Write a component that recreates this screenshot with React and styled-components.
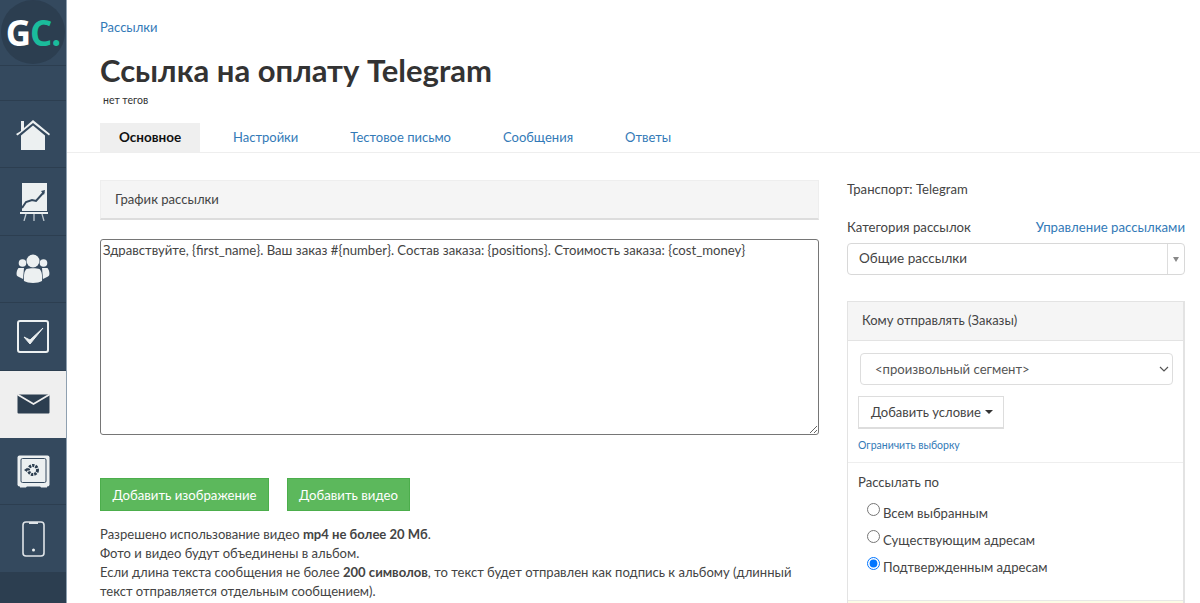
import React from "react";
import styled, { createGlobalStyle } from "styled-components";

const GlobalStyle = createGlobalStyle`
  html, body {
    margin: 0;
    padding: 0;
    height: 100%;
    overflow: hidden;
    background: #fff;
  }
  body {
    font-family: Lato, "Open Sans", sans-serif;
    font-size: 13px;
    color: #444;
  }
  * { box-sizing: border-box; }
`;

const Page = styled.div`
  display: flex;
  width: 1200px;
  height: 603px;
  overflow: hidden;
`;

const Sidebar = styled.nav`
  flex: none;
  width: 67px;
  height: 603px;
  background: #34495e;
  border-right: 1px solid #8fa0b0;
  display: flex;
  flex-direction: column;
`;

const LogoRow = styled.div`
  height: 66px;
  border-bottom: 1px solid #2c3e50;
  overflow: hidden;
`;

const LogoCircle = styled.div`
  width: 64px;
  height: 64px;
  border-radius: 50%;
  background: #2c3e50;
  margin: 0 0 0 1px;
  display: flex;
  align-items: center;
  justify-content: center;
  font-family: "Open Sans", sans-serif;
  font-weight: 700;
  font-size: 35px;
  letter-spacing: -1px;
  color: #fff;
  span { color: #1abc9c; }
`;

const EmptyRow = styled.div`
  height: 35px;
  border-bottom: 1px solid #2c3e50;
`;

const NavItem = styled.div`
  height: 67.400px;
  display: flex;
  align-items: center;
  justify-content: center;
  background: ${(p) => (p.$active ? "#efefef" : "transparent")};
  border-bottom: 1px solid ${(p) => (p.$active ? "#efefef" : "#2c3e50")};
`;

const SideBottom = styled.div`
  flex: 1;
  background: #2c3e50;
`;

const Main = styled.main`
  flex: 1;
  min-width: 0;
`;

const Header = styled.header`
  padding: 19px 0 0 33px;
`;

const Crumb = styled.a`
  display: block;
  color: #337ab7;
  font-size: 13px;
  line-height: 17px;
`;

const Title = styled.h1`
  margin: 14px 0 0;
  font-size: 31px;
  line-height: 40px;
  font-weight: 700;
  color: #333;
`;

const Tags = styled.div`
  margin: 3px 0 0 3px;
  font-size: 10.500px;
  line-height: 14px;
  color: #333;
`;

const Tabs = styled.div`
  display: flex;
  margin-top: 16px;
  padding-left: 33px;
  height: 30px;
  border-bottom: 1px solid #eee;
`;

const Tab = styled.a`
  height: 29px;
  line-height: 28px;
  padding: 0 26px;
  font-size: 13px;
  color: #337ab7;
`;

const ActiveTab = styled(Tab)`
  width: 100px;
  margin-right: 7px;
  padding: 0;
  text-align: center;
  font-size: 13.500px;
  font-weight: 700;
  color: #111;
  background: #efefef;
`;

const Columns = styled.div`
  display: flex;
  padding: 27px 15px 0 33px;
  gap: 28px;
`;

const LeftCol = styled.div`
  width: 719px;
  flex: none;
`;

const RightCol = styled.aside`
  width: 338px;
  flex: none;
`;

const ScheduleBar = styled.div`
  height: 40px;
  background: #f5f5f5;
  border: 1px solid #eee;
  border-bottom: 2px solid #ddd;
  padding-left: 14px;
  line-height: 37px;
  font-size: 13.100px;
`;

const MessageBox = styled.textarea`
  display: block;
  width: 719px;
  height: 196px;
  margin-top: 19px;
  padding: 2px;
  font: inherit;
  font-size: 13.150px;
  line-height: 17px;
  color: #444;
  border: 1px solid #767676;
  border-radius: 3px;
  outline: none;
`;

const ButtonRow = styled.div`
  display: flex;
  gap: 18px;
  margin-top: 43px;
`;

const GreenButton = styled.button`
  width: ${(p) => p.$w}px;
  height: 33px;
  padding: 0;
  border: 1px solid #4cae4c;
  background: #5cb85c;
  color: #fff;
  font: inherit;
  font-size: 13.200px;
`;

const Note = styled.p`
  margin: 14px 0 0;
  font-size: 13.050px;
  line-height: 19px;
`;

const Plain = styled.div`
  font-size: 13.100px;
  line-height: 18px;
`;

const CategoryRow = styled.div`
  display: flex;
  justify-content: space-between;
  margin-top: 21px;
  font-size: 13.200px;
  line-height: 17px;
  a { color: #337ab7; }
`;

const Combo = styled.div`
  display: flex;
  height: 32px;
  margin-top: 7px;
  border: 1px solid #d8d8d8;
  border-radius: 4px;
`;

const ComboValue = styled.div`
  flex: 1;
  padding-left: 11px;
  line-height: 29px;
  font-size: 13.500px;
`;

const ComboArrow = styled.div`
  width: 17px;
  border-left: 1px solid #ddd;
  display: flex;
  align-items: center;
  justify-content: center;
  &::after {
    content: "";
    border-top: 5px solid #888;
    border-left: 3px solid transparent;
    border-right: 3px solid transparent;
  }
`;

const Panel = styled.section`
  margin-top: 26px;
  border: 1px solid #e3e3e3;
  border-width: 1px 2px 0 1px;
  height: 310px;
`;

const PanelHead = styled.div`
  height: 39px;
  background: #f5f5f5;
  border-bottom: 1px solid #e3e3e3;
  padding-left: 14px;
  line-height: 37px;
  font-size: 13px;
`;

const PanelTop = styled.div`
  padding: 12px 10px 0;
  height: 122px;
  border-bottom: 1px solid #eee;
`;

const SegmentSelect = styled.div`
  height: 32px;
  margin: 0 0 0 2px;
  border: 1px solid #ddd;
  border-radius: 4px;
  padding-left: 14px;
  line-height: 30px;
  font-size: 13.100px;
  color: #555;
  display: flex;
  justify-content: space-between;
  align-items: center;
  svg { margin-right: 3px; }
`;

const ConditionButton = styled.div`
  display: inline-flex;
  align-items: center;
  gap: 4px;
  height: 33px;
  width: 146px;
  margin-top: 11px;
  padding-left: 12px;
  border: 1px solid #ddd;
  border-bottom-width: 2px;
  font-size: 13px;
  &::after {
    content: "";
    border-top: 4px solid #333;
    border-left: 4px solid transparent;
    border-right: 4px solid transparent;
  }
`;

const SmallLink = styled.a`
  display: block;
  margin-top: 9px;
  color: #337ab7;
  font-size: 10.500px;
  line-height: 15px;
`;

const PanelBottom = styled.div`
  padding: 10px 10px 0;
  height: 137px;
`;

const RadioRow = styled.label`
  display: flex;
  align-items: center;
  height: 27px;
  padding-left: 9px;
  font-size: 13.100px;
  input {
    margin: 0 3px 6px 0;
    width: 13px;
    height: 13px;
  }
`;

const RadioList = styled.div`
  margin-top: 8px;
`;

const NoticeBand = styled.div`
  height: 10px;
  background: #fcfce6;
  border-top: 1px solid #e8e8e8;
`;

const HomeIcon = () => (
  <svg width="34" height="34" viewBox="0 0 34 34" fill="#ecf0f1">
    <path d="M5 14 L5 4 L8 4 L8 11 L17 3 L34 17 L33 18.500 L17 6 L1.500 18.500 L0 17 Z" />
    <path d="M5 18.500 L17 8.500 L29 18.500 L29 33 L5 33 Z" />
  </svg>
);

const ChartIcon = () => (
  <svg width="32" height="38" viewBox="0 0 32 38" fill="none">
    <rect x="5" y="0" width="25" height="28" fill="#ecf0f1" />
    <path d="M5 25 L9 19 L15 17 L19 18 L27 9" stroke="#34495e" strokeWidth="2" />
    <path d="M24 8 L28 7 L27 12 Z" fill="#34495e" />
    <rect x="3" y="29" width="28" height="2" fill="#ecf0f1" />
    <path d="M9 31 L7 38 M17 31 L17 38 M25 31 L27 38" stroke="#bdc7cf" strokeWidth="1.300" />
  </svg>
);

const TeamIcon = () => (
  <svg width="34" height="30" viewBox="0 0 34 30" fill="#ecf0f1">
    <circle cx="6.500" cy="9" r="3.800" />
    <circle cx="27.500" cy="9" r="3.800" />
    <path d="M2.500 14 L8 14 L7 25 L2 22.500 C0 22 0 17 2.500 14 Z" />
    <path d="M31.500 14 L26 14 L27 25 L32 22.500 C34 22 34 17 31.500 14 Z" />
    <circle cx="17" cy="7" r="6.500" />
    <path d="M10.500 15 C13 14 21 14 23.500 15 C26 17 26.500 23 26 27 C22 29.500 12 29.500 8 27 C7.500 23 8 17 10.500 15 Z" />
  </svg>
);

const TaskIcon = () => (
  <svg width="32" height="33" viewBox="0 0 32 33" fill="none">
    <rect x="1" y="1" width="30" height="31" rx="2" stroke="#ecf0f1" strokeWidth="2" />
    <path d="M7 17 L13 24 L26 8 L13 20 Z" fill="#ecf0f1" stroke="#ecf0f1" strokeWidth="1" />
  </svg>
);

const MailIcon = () => (
  <svg width="33" height="20" viewBox="0 0 33 20">
    <path d="M0.500 1.500 Q0.500 0.500 1.500 0.500 L31.500 0.500 Q32.500 0.500 32.500 1.500 L32.500 18.500 Q32.500 19.500 31.500 19.500 L1.500 19.500 Q0.500 19.500 0.500 18.500 Z" fill="#2c3e50" />
    <path d="M0.500 0.500 L16.500 10 L32.500 0.500" fill="none" stroke="#efefef" strokeWidth="1.800" />
  </svg>
);

const SafeIcon = () => (
  <svg width="33" height="33" viewBox="0 0 33 33">
    <path d="M3 31 L3 32.500 L9 32.500 L10 31 Z M23 31 L24 32.500 L30 32.500 L30 31 Z" fill="#ecf0f1" />
    <rect x="0.500" y="0.500" width="32" height="31" rx="2" fill="#ecf0f1" />
    <rect x="4" y="3.500" width="25" height="24" rx="1.500" fill="#ecf0f1" stroke="#34495e" strokeWidth="1" />
    <circle cx="16" cy="15" r="4.500" fill="none" stroke="#2c3e50" strokeWidth="3" strokeDasharray="2.300 1" />
    <path d="M7 15 L10 13 L10 17 Z" fill="#2c3e50" />
  </svg>
);

const PhoneIcon = () => (
  <svg width="23" height="36" viewBox="0 0 23 36" fill="none">
    <rect x="1" y="1" width="21" height="34" rx="3" stroke="#dfe4e8" strokeWidth="1.600" />
    <rect x="7" y="1" width="9" height="2" fill="#dfe4e8" />
    <circle cx="11.500" cy="29" r="1.500" fill="#ecf0f1" />
  </svg>
);

const App = () => {
  return (
    <>
      <GlobalStyle />
      <Page>
        <Sidebar>
          <LogoRow>
            <LogoCircle>
              G<span>C.</span>
            </LogoCircle>
          </LogoRow>
          <EmptyRow />
          <NavItem><HomeIcon /></NavItem>
          <NavItem><ChartIcon /></NavItem>
          <NavItem><TeamIcon /></NavItem>
          <NavItem><TaskIcon /></NavItem>
          <NavItem $active><MailIcon /></NavItem>
          <NavItem><SafeIcon /></NavItem>
          <NavItem><PhoneIcon /></NavItem>
          <SideBottom />
        </Sidebar>
        <Main>
          <Header>
            <Crumb>Рассылки</Crumb>
            <Title>Ссылка на оплату Telegram</Title>
            <Tags>нет тегов</Tags>
          </Header>
          <Tabs>
            <ActiveTab>Основное</ActiveTab>
            <Tab>Настройки</Tab>
            <Tab>Тестовое письмо</Tab>
            <Tab>Сообщения</Tab>
            <Tab>Ответы</Tab>
          </Tabs>
          <Columns>
            <LeftCol>
              <ScheduleBar>График рассылки</ScheduleBar>
              <MessageBox
                readOnly
                value="Здравствуйте, {first_name}. Ваш заказ #{number}. Состав заказа: {positions}. Стоимость заказа: {cost_money}"
              />
              <ButtonRow>
                <GreenButton $w={169}>Добавить изображение</GreenButton>
                <GreenButton $w={123}>Добавить видео</GreenButton>
              </ButtonRow>
              <Note>
                Разрешено использование видео <b>mp4 не более 20 Мб</b>.<br />
                Фото и видео будут объединены в альбом.<br />
                Если длина текста сообщения не более <b>200 символов</b>, то текст будет отправлен как подпись к альбому (длинный<br />
                текст отправляется отдельным сообщением).
              </Note>
            </LeftCol>
            <RightCol>
              <Plain>Транспорт: Telegram</Plain>
              <CategoryRow>
                <span>Категория рассылок</span>
                <a>Управление рассылками</a>
              </CategoryRow>
              <Combo>
                <ComboValue>Общие рассылки</ComboValue>
                <ComboArrow />
              </Combo>
              <Panel>
                <PanelHead>Кому отправлять (Заказы)</PanelHead>
                <PanelTop>
                  <SegmentSelect>
                    &lt;произвольный сегмент&gt;
                    <svg width="10" height="6" viewBox="0 0 10 6" fill="none">
                      <path d="M1 1 L5 5 L9 1" stroke="#555" strokeWidth="1.200" />
                    </svg>
                  </SegmentSelect>
                  <ConditionButton>Добавить условие</ConditionButton>
                  <SmallLink>Ограничить выборку</SmallLink>
                </PanelTop>
                <PanelBottom>
                  <Plain>Рассылать по</Plain>
                  <RadioList>
                    <RadioRow><input type="radio" name="scope" readOnly />Всем выбранным</RadioRow>
                    <RadioRow><input type="radio" name="scope" readOnly />Существующим адресам</RadioRow>
                    <RadioRow><input type="radio" name="scope" defaultChecked />Подтвержденным адресам</RadioRow>
                  </RadioList>
                </PanelBottom>
                <NoticeBand />
              </Panel>
            </RightCol>
          </Columns>
        </Main>
      </Page>
    </>
  );
};

export default App;
